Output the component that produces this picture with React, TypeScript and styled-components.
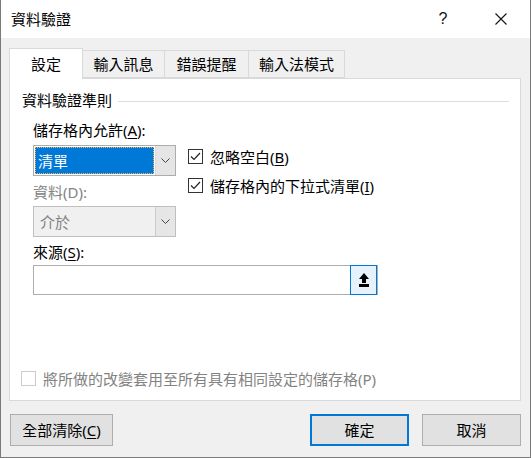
import React from 'react';
import styled, {createGlobalStyle} from "styled-components";

const GlobalStyle = createGlobalStyle`
html, body {
margin: 0;
padding: 0;
background: #ffffff;
}
* {
box-sizing: border-box;
}
body {
font-family: "Noto Sans", "Noto Sans CJK TC", sans-serif;
font-size: 15px;
color: #000;
}
`

const Window = styled.div`
width: 531px;
height: 458px;
display: flex;
flex-direction: column;
border: 1px solid #7a7a7a;
border-top: none;
background: #f0f0f0;
`
const TitleBar = styled.div`
height: 38px;
flex-shrink: 0;
background: #fff;
display: flex;
align-items: center;
padding-left: 10px;
`
const TitleText = styled.div`
flex: 1;
line-height: 20px;
`
const TitleIcon = styled.div`
width: 58px;
display: flex;
justify-content: center;
align-items: center;
height: 38px;
font-family: "Liberation Sans", sans-serif;
font-size: 16px;
font-weight: 300;
color: #111;
`
const Body = styled.div`
flex: 1;
display: flex;
flex-direction: column;
padding: 10px 9px 11px 8px;
`
const TabList = styled.div`
display: flex;
align-items: flex-end;
height: 30px;
position: relative;
z-index: 1;
`
const Tab = styled.div<{ $w: number; $active?: boolean }>`
width: ${p => p.$w}px;
height: ${p => p.$active ? 31 : 28}px;
margin-left: -1px;
&:first-child { margin-left: 0; }
margin-bottom: ${p => p.$active ? -1 : 0}px;
border: 1px solid #d9d9d9;
border-bottom: ${p => p.$active ? 'none' : '1px solid #d9d9d9'};
background: ${p => p.$active ? '#fff' : '#f0f0f0'};
display: flex;
justify-content: center;
align-items: center;
padding-bottom: ${p => p.$active ? 1 : 0}px;
line-height: 20px;
`
const Panel = styled.div`
height: 323px;
background: #fff;
border: 1px solid #d9d9d9;
display: flex;
flex-direction: column;
padding: 11px 11px 11px 11px;
`
const GroupHeader = styled.div`
display: flex;
align-items: center;
line-height: 20px;
padding-left: 1px;
gap: 6px;
&::after {
content: "";
flex: 1;
height: 1px;
margin-top: 2px;
background: #dcdcdc;
}
`
const Content = styled.div`
display: flex;
gap: 12px;
padding-left: 12px;
margin-top: 10px;
align-items: flex-start;
`
const LeftCol = styled.div`
display: flex;
flex-direction: column;
`
const Label = styled.div<{ $disabled?: boolean; $mt?: number }>`
line-height: 20px;
margin-top: ${p => p.$mt ?? 0}px;
color: ${p => p.$disabled ? '#838383' : '#000'};
white-space: nowrap;
`
const Key = styled.span`
text-decoration: underline;
text-underline-offset: 2px;
`
const Combo = styled.div<{ $disabled?: boolean; $mt?: number }>`
width: 143px;
height: 31px;
margin-top: ${p => p.$mt ?? 0}px;
display: flex;
border: 1px solid ${p => p.$disabled ? '#bfbfbf' : '#adadad'};
background: ${p => p.$disabled ? '#f0f0f0' : '#fff'};
`
const ComboValue = styled.div<{ $selected?: boolean }>`
flex: 1;
margin: 1px;
padding-left: ${p => p.$selected ? 2 : 4}px;
display: flex;
align-items: center;
line-height: 20px;
color: ${p => p.$selected ? '#fff' : '#838383'};
background: ${p => p.$selected ? '#0078d7' : 'transparent'};
border: 1px dotted ${p => p.$selected ? '#f7b64a' : 'transparent'};
`
const ComboButton = styled.div<{ $disabled?: boolean }>`
width: 20px;
display: flex;
align-items: center;
justify-content: center;
background: ${p => p.$disabled ? '#e6e6e6' : '#e5e5e5'};
border-left: 1px solid ${p => p.$disabled ? '#cccccc' : '#dadada'};
`
const RightCol = styled.div`
display: flex;
flex-direction: column;
gap: 9px;
padding-top: 27px;
`
const CheckRow = styled.div<{ $disabled?: boolean }>`
display: flex;
align-items: center;
gap: 7px;
line-height: 20px;
color: ${p => p.$disabled ? '#838383' : '#000'};
white-space: nowrap;
`
const Box = styled.div<{ $disabled?: boolean }>`
width: 15px;
height: 15px;
border: 1px solid ${p => p.$disabled ? '#cccccc' : '#333333'};
background: #fff;
display: flex;
align-items: center;
justify-content: center;
margin-top: -1px;
`
const SourceInput = styled.div`
width: 345px;
height: 30px;
margin-top: 3px;
margin-left: 12px;
border: 1px solid #adadad;
display: flex;
justify-content: flex-end;
`
const PickButton = styled.div`
width: 27px;
margin: -1px 0 -1px 0;
border: 1px solid #0078d7;
background: #e5f1fb;
display: flex;
align-items: center;
justify-content: center;
`
const Footer = styled.div`
margin-top: auto;
`
const ButtonBar = styled.div`
display: flex;
margin-top: 13px;
padding-left: 1px;
`
const Button = styled.div<{ $w: number; $primary?: boolean }>`
width: ${p => p.$w}px;
height: 32px;
display: flex;
align-items: center;
justify-content: center;
background: #e1e1e1;
border: ${p => p.$primary ? '2px solid #0078d7' : '1px solid #adadad'};
line-height: 20px;
`
const Spacer = styled.div`
flex: 1;
`

const Chevron = () => (
    <svg width="9" height="5" viewBox="0 0 9 5">
        <path d="M0.5 0.5 L4.5 4.5 L8.5 0.5" fill="none" stroke="#444" strokeWidth="1"/>
    </svg>
)

const Check = () => (
    <svg width="11" height="9" viewBox="0 0 11 9">
        <path d="M1 4.5 L4 7.5 L10 1" fill="none" stroke="#222" strokeWidth="1.2"/>
    </svg>
)

const App = () => {
    return (
        <>
            <GlobalStyle/>
            <Window>
                <TitleBar>
                    <TitleText>資料驗證</TitleText>
                    <TitleIcon>?</TitleIcon>
                    <TitleIcon>
                        <svg width="12" height="12" viewBox="0 0 12 12">
                            <path d="M0.5 0.5 L11.5 11.5 M11.5 0.5 L0.5 11.5" stroke="#111" strokeWidth="1.1"/>
                        </svg>
                    </TitleIcon>
                </TitleBar>
                <Body>
                    <TabList>
                        <Tab $w={74} $active>設定</Tab>
                        <Tab $w={83}>輸入訊息</Tab>
                        <Tab $w={85}>錯誤提醒</Tab>
                        <Tab $w={97}>輸入法模式</Tab>
                    </TabList>
                    <Panel>
                        <GroupHeader>資料驗證準則</GroupHeader>
                        <Content>
                            <LeftCol>
                                <Label>儲存格內允許(<Key>A</Key>):</Label>
                                <Combo $mt={5}>
                                    <ComboValue $selected>清單</ComboValue>
                                    <ComboButton><Chevron/></ComboButton>
                                </Combo>
                                <Label $disabled $mt={6}>資料(D):</Label>
                                <Combo $disabled $mt={4}>
                                    <ComboValue>介於</ComboValue>
                                    <ComboButton $disabled><Chevron/></ComboButton>
                                </Combo>
                                <Label $mt={5}>來源(<Key>S</Key>):</Label>
                            </LeftCol>
                            <RightCol>
                                <CheckRow><Box><Check/></Box><span>忽略空白(<Key>B</Key>)</span></CheckRow>
                                <CheckRow><Box><Check/></Box><span>儲存格內的下拉式清單(<Key>I</Key>)</span></CheckRow>
                            </RightCol>
                        </Content>
                        <SourceInput>
                            <PickButton>
                                <svg width="10" height="14" viewBox="0 0 10 14">
                                    <path d="M5 0 L10 6 H7 V10 H3 V6 H0 Z" fill="#000"/>
                                    <rect x="0" y="11" width="10" height="3" fill="#000"/>
                                </svg>
                            </PickButton>
                        </SourceInput>
                        <Footer>
                            <CheckRow $disabled><Box $disabled/><span>將所做的改變套用至所有具有相同設定的儲存格(P)</span></CheckRow>
                        </Footer>
                    </Panel>
                    <ButtonBar>
                        <Button $w={103}>全部清除(<Key>C</Key>)</Button>
                        <Spacer/>
                        <Button $w={99} $primary>確定</Button>
                        <Button $w={99} style={{marginLeft: 13}}>取消</Button>
                    </ButtonBar>
                </Body>
            </Window>
        </>
    );
};

export default App;
